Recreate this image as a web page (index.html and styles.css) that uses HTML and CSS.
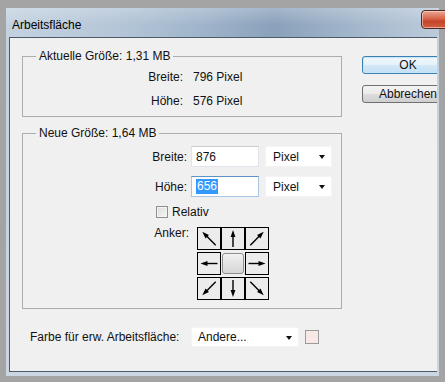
FILE: index.html
```html
<!doctype html>
<html lang="de">

<head>
  <meta charset="UTF-8" />
  <meta name="viewport" content="width=device-width, initial-scale=1.0" />
  <title>Arbeitsfläche</title>

  <link rel="stylesheet" href="styles.css">
</head>

<body>
  <div class="frame">
    <div class="window">
      <div class="titlebar">
        <span class="title">Arbeitsfläche</span>
        <span class="close-btn"></span>
      </div>

      <div class="client">
        <div class="main">
          <div class="groups">
            <fieldset class="group group-current">
              <legend>Aktuelle Größe: 1,31 MB</legend>
              <div class="info-row">
                <span class="info-label">Breite:</span>
                <span class="info-value">796 Pixel</span>
              </div>
              <div class="info-row">
                <span class="info-label">Höhe:</span>
                <span class="info-value">576 Pixel</span>
              </div>
            </fieldset>

            <fieldset class="group group-new">
              <legend>Neue Größe: 1,64 MB</legend>
              <div class="field-row">
                <span class="field-label">Breite:</span>
                <span class="text-input">876</span>
                <span class="dropdown unit">Pixel<i class="caret"></i></span>
              </div>
              <div class="field-row">
                <span class="field-label">Höhe:</span>
                <span class="text-input focused"><span class="selection">656</span></span>
                <span class="dropdown unit">Pixel<i class="caret"></i></span>
              </div>
              <div class="check-row">
                <span class="checkbox"></span>
                <span>Relativ</span>
              </div>
              <div class="anchor-row">
                <span class="anchor-label">Anker:</span>
                <div class="anchor-grid">
                  <span class="anchor-cell"><svg viewBox="0 0 22 21"><g transform="rotate(-45 11 10.5)"><line x1="11" y1="20" x2="11" y2="6" /><polygon points="11,1 8.6,8 13.4,8" /></g></svg></span>
                  <span class="anchor-cell"><svg viewBox="0 0 22 21"><g><line x1="11" y1="19" x2="11" y2="6" /><polygon points="11,2 8.6,9 13.4,9" /></g></svg></span>
                  <span class="anchor-cell"><svg viewBox="0 0 22 21"><g transform="rotate(45 11 10.5)"><line x1="11" y1="20" x2="11" y2="6" /><polygon points="11,1 8.6,8 13.4,8" /></g></svg></span>
                  <span class="anchor-cell"><svg viewBox="0 0 22 21"><g transform="rotate(-90 11 10.5)"><line x1="11" y1="19" x2="11" y2="6" /><polygon points="11,2 8.6,9 13.4,9" /></g></svg></span>
                  <span class="anchor-cell anchor-center"><span class="center-knob"></span></span>
                  <span class="anchor-cell"><svg viewBox="0 0 22 21"><g transform="rotate(90 11 10.5)"><line x1="11" y1="19" x2="11" y2="6" /><polygon points="11,2 8.6,9 13.4,9" /></g></svg></span>
                  <span class="anchor-cell"><svg viewBox="0 0 22 21"><g transform="rotate(-135 11 10.5)"><line x1="11" y1="20" x2="11" y2="6" /><polygon points="11,1 8.6,8 13.4,8" /></g></svg></span>
                  <span class="anchor-cell"><svg viewBox="0 0 22 21"><g transform="rotate(180 11 10.5)"><line x1="11" y1="19" x2="11" y2="6" /><polygon points="11,2 8.6,9 13.4,9" /></g></svg></span>
                  <span class="anchor-cell"><svg viewBox="0 0 22 21"><g transform="rotate(135 11 10.5)"><line x1="11" y1="20" x2="11" y2="6" /><polygon points="11,1 8.6,8 13.4,8" /></g></svg></span>
                </div>
              </div>
            </fieldset>
          </div>

          <div class="buttons">
            <button class="btn btn-default">OK</button>
            <button class="btn">Abbrechen</button>
          </div>
        </div>

        <div class="bg-row">
          <span class="bg-label">Farbe für erw. Arbeitsfläche:</span>
          <span class="dropdown bg-select">Andere...<i class="caret"></i></span>
          <span class="swatch"></span>
        </div>
      </div>
    </div>
  </div>
</body>

</html>
```

FILE: styles.css
```css
* {
  box-sizing: border-box;
}

body {
  margin: 0;
  font-family: "Liberation Sans", Arial, sans-serif;
  font-size: 12px;
  color: #111;
}

.frame {
  width: 445px;
  height: 382px;
  padding: 8px 6px 6px 6px;
  background: #a4a4a4;
  overflow: hidden;
}

.window {
  height: 100%;
  display: flex;
  flex-direction: column;
  padding: 0 2px 4px 3px;
  background: linear-gradient(180deg, #c3d0dd 0%, #cbd6e2 100%);
}

/* title bar */
.titlebar {
  position: relative;
  height: 29px;
  margin: 0 -2px 0 -3px;
  padding: 0 0 0 6px;
  display: flex;
  align-items: center;
  background:
    linear-gradient(180deg, rgba(255, 255, 255, 0.22) 0%, rgba(255, 255, 255, 0) 60%),
    linear-gradient(90deg, #c4d2e0 0%, #b5c6d8 25%, #a0b5cb 45%, #8aa1bb 62%, #a2b6cb 80%, #bccbdb 100%);
}

.title {
  font-family: "Liberation Sans", Arial, sans-serif;
  font-size: 12px;
  color: #000;
  padding-top: 5px;
}

.close-btn {
  position: absolute;
  top: 2px;
  right: -17px;
  width: 35px;
  height: 19px;
  border: 1px solid #4e2a22;
  border-radius: 4px;
  box-shadow: inset 0 0 0 1px rgba(255, 220, 210, 0.6);
  background: linear-gradient(180deg, #e9a895 0%, #d7654b 45%, #c5432a 60%, #d0603f 100%);
}

/* client area */
.client {
  flex: 1;
  display: flex;
  flex-direction: column;
  background: #f0f0f0;
  border: 1px solid #4d5b69;
  border-right: none;
  overflow: hidden;
}

.main {
  display: flex;
}

.groups {
  padding-left: 12px;
}

.group {
  width: 320px;
  margin: 0;
  padding: 0;
  border: 1px solid #adadad;
}

.group legend {
  margin-left: 13px;
  padding: 0 3px;
  line-height: 14px;
}

.group-current {
  margin-top: 11px;
  padding: 2px 0 3px;
}

.group-new {
  margin-top: 9px;
  padding: 6px 0 8px;
}

.info-row {
  display: flex;
  height: 24px;
  align-items: center;
}

.info-label {
  width: 161px;
  text-align: right;
  padding-right: 1px;
}

.info-value {
  margin-left: 9px;
}

.field-row {
  display: flex;
  align-items: center;
  height: 21px;
  margin-bottom: 9px;
}

.field-label {
  width: 164px;
  text-align: right;
  margin-right: 4px;
}

.text-input {
  width: 68px;
  height: 21px;
  padding: 0 4px;
  display: flex;
  align-items: center;
  background: #fff;
  border: 1px solid #e2e3ea;
  border-top-color: #c9ccd3;
}

.text-input.focused {
  border-color: #a9c6e2;
  border-top-color: #5f93c4;
}

.selection {
  background: #3399ff;
  color: #fff;
  line-height: 15px;
  padding: 0 1px;
}

.dropdown {
  position: relative;
  height: 21px;
  display: flex;
  align-items: center;
  padding-left: 7px;
  background: #fff;
  border: 1px solid #f4f4f4;
}

.unit {
  width: 67px;
  margin-left: 6px;
}

.caret {
  position: absolute;
  right: 6px;
  top: 8px;
  width: 0;
  height: 0;
  border-style: solid;
  border-width: 4px 3.5px 0 3.5px;
  border-color: #111 transparent transparent transparent;
}

.check-row {
  display: flex;
  align-items: center;
  padding-left: 133px;
  height: 12px;
  margin-top: 1px;
}

.checkbox {
  width: 12px;
  height: 12px;
  margin-right: 4px;
  border: 1px solid #8e8f8f;
  background: linear-gradient(135deg, #dcdcdc 0%, #f6f6f6 100%);
  box-shadow: inset 0 0 0 1px #f4f4f4;
}

.anchor-row {
  display: flex;
  margin-top: 9px;
}

.anchor-label {
  width: 167px;
  text-align: right;
  padding-right: 1px;
  line-height: 12px;
}

.anchor-grid {
  margin-left: 7px;
  display: grid;
  grid-template-columns: repeat(3, 24px);
  grid-template-rows: repeat(3, 23px);
  row-gap: 2px;
}

.anchor-cell {
  display: flex;
  align-items: center;
  justify-content: center;
  border: 1px solid #000;
  background: #ececec;
}

.anchor-cell svg {
  width: 22px;
  height: 21px;
}

.anchor-cell line {
  stroke: #000;
  stroke-width: 1.4;
}

.anchor-cell polygon {
  fill: #000;
}

.anchor-center {
  border: none;
  padding: 1px;
}

.center-knob {
  width: 100%;
  height: 100%;
  border: 1px solid #8f8f8f;
  border-radius: 3px;
  background: linear-gradient(180deg, #f2f2f2 0%, #e3e3e3 50%, #d6d6d6 100%);
}

/* buttons */
.buttons {
  display: flex;
  flex-direction: column;
  margin-left: 20px;
  padding-top: 18px;
  gap: 11px;
}

.btn {
  width: 92px;
  height: 18px;
  padding: 0;
  font-family: inherit;
  font-size: 12px;
  color: #111;
  border: 1px solid #707070;
  border-radius: 3px;
  background: linear-gradient(180deg, #f3f3f3 0%, #ebebeb 48%, #dddddd 52%, #cfcfcf 100%);
}

.btn-default {
  border-color: #3c7fb1;
  box-shadow: inset 0 0 0 1px #c5e6f7;
  background: linear-gradient(180deg, #f0f7fc 0%, #e5f1fb 48%, #d3e8f7 52%, #c4e0f4 100%);
}

/* bottom row */
.bg-row {
  display: flex;
  align-items: center;
  margin-top: 18px;
  padding-left: 20px;
}

.bg-label {
  width: 161px;
}

.bg-select {
  width: 108px;
  height: 20px;
  padding-left: 6px;
}

.swatch {
  width: 14px;
  height: 14px;
  margin-left: 6px;
  border: 1px solid #9a9a9a;
  background: #f8e8e6;
}
```
